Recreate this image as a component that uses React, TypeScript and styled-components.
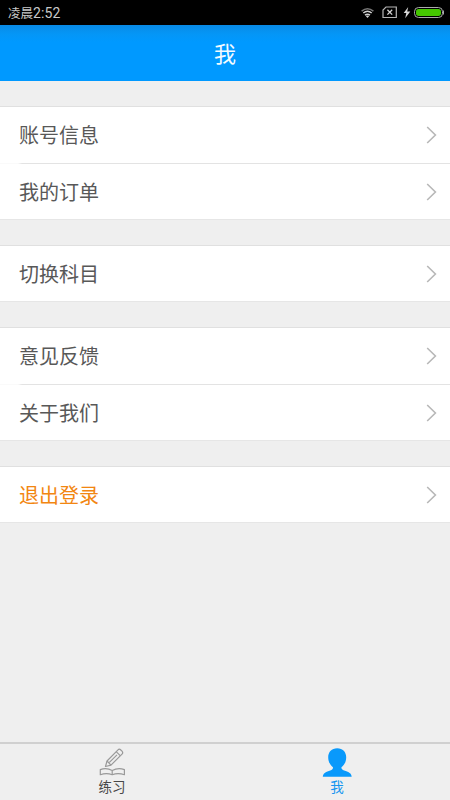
import React from 'react';
import styled, { createGlobalStyle } from 'styled-components';

const GlobalStyle = createGlobalStyle`
  * { box-sizing: border-box; }
  body {
    margin: 0;
    background: #efefef;
    font-family: Roboto, "Noto Sans CJK SC", sans-serif;
  }
`;

const Screen = styled.div`
  display: flex;
  flex-direction: column;
  width: 100%;
  height: 100vh;
  overflow: hidden;
  background: #efefef;
`;

const StatusBar = styled.div`
  display: flex;
  flex: none;
  align-items: center;
  justify-content: space-between;
  height: 25px;
  padding: 0 6px 0 8px;
  background: #000;
  color: #c9c9c9;
`;

const Clock = styled.span`
  font-size: 12.5px;
  line-height: 25px;
  padding-top: 1px;
`;

const ClockDigits = styled.span`
  font-size: 14px;
  letter-spacing: 0.1px;
`;

const StatusIcons = styled.svg`
  display: block;
  width: 86px;
  height: 25px;
`;

const Header = styled.header`
  display: flex;
  flex: none;
  align-items: center;
  justify-content: center;
  height: 56px;
  background: linear-gradient(#088ae6 0, #0596f6 9px, #0099ff 17px);
`;

const Title = styled.h1`
  margin: 0;
  padding-top: 3px;
  color: #f4fbff;
  font-size: 22px;
  font-weight: 400;
  line-height: 53px;
`;

const Content = styled.main`
  display: flex;
  flex: 1;
  flex-direction: column;
  gap: 25px;
  padding-top: 25px;
`;

const Group = styled.section`
  border-top: 1px solid #e0e0e0;
`;

const Row = styled.div<{ $accent?: boolean }>`
  display: flex;
  align-items: center;
  justify-content: space-between;
  height: 56px;
  padding: 0 13px 0 19px;
  background: #fff;
  color: ${(p) => (p.$accent ? '#f28611' : '#585858')};
  font-size: 20px;
  box-shadow: inset 0 -1px #e6e6e6;

  &:not(:last-child) {
    height: 57px;
    padding-bottom: 1px;
    box-shadow: none;
    background: linear-gradient(90deg, #fafafa 0, #fafafa 18px, #e3e3e3 22px) left bottom / 100% 1px no-repeat #fff;
  }
`;

const RowLabel = styled.span`
  padding-top: 2px;
  line-height: 54px;
`;

const Arrow = styled.svg`
  display: block;
  width: 11px;
  height: 18px;
`;

const TabBar = styled.nav`
  display: flex;
  flex: none;
  height: 58px;
  border-top: 2px solid #d0d0d0;
  background: #efefef;
`;

const Tab = styled.div<{ $active?: boolean }>`
  display: flex;
  flex: 1;
  flex-direction: column;
  align-items: center;
  padding: 4px 1px 0 0;
  color: ${(p) => (p.$active ? '#1696f0' : '#484848')};
`;

const TabIcon = styled.svg`
  display: block;
  width: 30px;
  height: 29px;
`;

const TabLabel = styled.span`
  font-size: 13.5px;
  line-height: 20px;
`;

const groups = [
  ['账号信息', '我的订单'],
  ['切换科目'],
  ['意见反馈', '关于我们'],
  ['退出登录'],
];

export default function App() {
  return (
    <Screen>
      <GlobalStyle />
      <StatusBar>
        <Clock>凌晨<ClockDigits>2:52</ClockDigits></Clock>
        <StatusIcons viewBox="358 0 86 25" fill="none">
          <g stroke="#d2d2d2" strokeWidth="1.5">
            <path d="M361.6 11.2Q367.5 6.4 373.4 11.2" stroke="#777" />
            <path d="M363.3 13Q367.5 9.6 371.7 13" />
            <path d="M365 15.1Q367.5 13.2 370 15.1" />
          </g>
          <path d="M365.8 16L367.5 18L369.2 16Q367.5 15 365.8 16Z" fill="#d2d2d2" />
          <path d="M386 7H396.3V17.5H383V10Z" stroke="#b5b5b5" strokeWidth="1.2" />
          <path d="M387.4 9.8L392.2 14.6M392.2 9.8L387.4 14.6" stroke="#d2d2d2" strokeWidth="1.3" />
          <path d="M408.2 7L403.7 13H406.3L405.2 18.2L410.3 11.6H407.2Z" fill="#d8d8d8" />
          <rect x="414.5" y="7.5" width="28" height="10" rx="4" stroke="#aaa" />
          <rect x="416" y="9" width="25" height="7" rx="2.7" fill="#45c700" />
          <path d="M443.5 10.5V14.5" stroke="#aaa" />
        </StatusIcons>
      </StatusBar>
      <Header><Title>我</Title></Header>
      <Content>
        {groups.map((rows) => (
          <Group key={rows[0]}>
            {rows.map((label) => (
              <Row key={label} $accent={label === '退出登录'}>
                <RowLabel>{label}</RowLabel>
                <Arrow viewBox="0 0 11 18" fill="none" stroke="#b8b8b8" strokeWidth="1.6">
                  <path d="M1.2 1L9.4 9L1.2 17" />
                </Arrow>
              </Row>
            ))}
          </Group>
        ))}
      </Content>
      <TabBar>
        <Tab>
          <TabIcon viewBox="97 748 30 29" fill="none" stroke="#999" strokeWidth="1.2" strokeLinejoin="round">
            <path d="M105.5 766.5L107 761L118 749.8Q119.3 748.5 120.8 750L122 751.2Q123.4 752.7 122 754.1L111 765.1Z" />
            <path d="M116.2 751.7L120.2 755.7M107 761L111 765.1M109.4 762.4L117 754.8" />
            <path d="M112.2 770.5Q106.5 767.4 100.3 769.6V774.7Q106.5 772.6 112.2 774.7Q118 772.6 124.4 774.7V769.6Q118 767.4 112.2 770.5V774.7" />
          </TabIcon>
          <TabLabel>练习</TabLabel>
        </Tab>
        <Tab $active>
          <TabIcon viewBox="322 748 30 29" fill="#0999fb">
            <path d="M337.2 748.2C331.7 748.2 328.2 752 328.2 757.2C328.2 762.1 330.5 765.3 333 767.2C333 769.4 331.8 770 329.5 770.8C325.6 772.1 323.2 773.2 322.8 776.8H351.7C351.3 773.2 348.8 772.1 345 770.8C342.7 770 341.4 769.4 341.4 767.2C344 765.3 346.2 762.1 346.2 757.2C346.2 752 342.7 748.2 337.2 748.2Z" />
          </TabIcon>
          <TabLabel>我</TabLabel>
        </Tab>
      </TabBar>
    </Screen>
  );
}
